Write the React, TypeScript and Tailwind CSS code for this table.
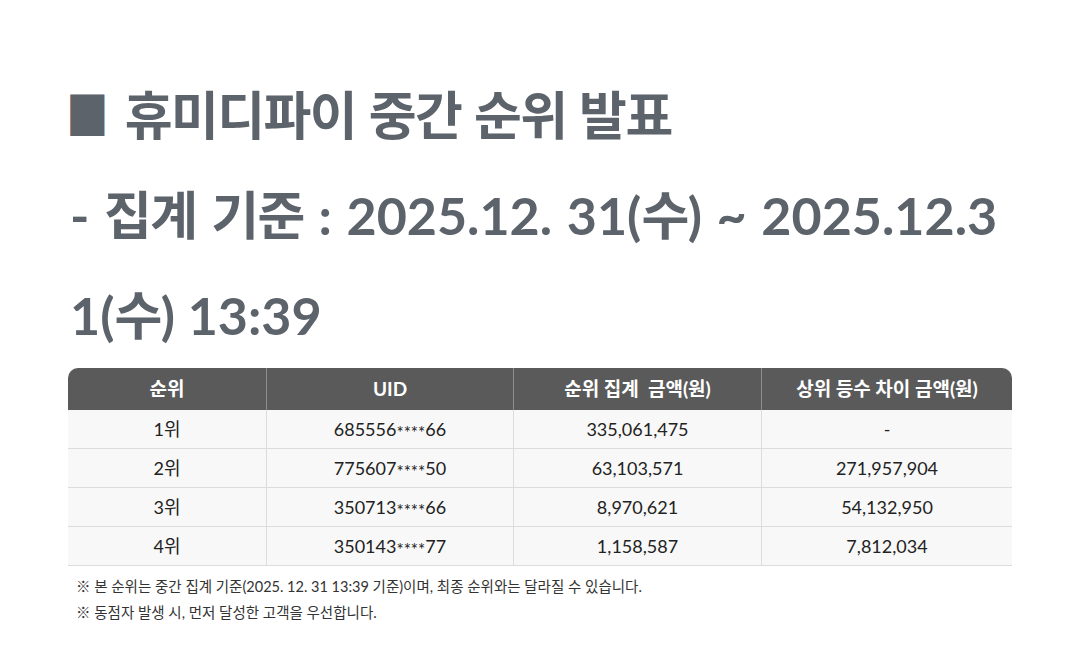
import React from "react";

const K = ({ children }: { children: React.ReactNode }) => (
  <span className="tracking-[-0.03em]">{children}</span>
);

const rows = [
  ["1위", "685556", "66", "335,061,475", "-"],
  ["2위", "775607", "50", "63,103,571", "271,957,904"],
  ["3위", "350713", "66", "8,970,621", "54,132,950"],
  ["4위", "350143", "77", "1,158,587", "7,812,034"],
];

export default function App() {
  return (
    <div className="min-h-[653px] w-[1080px] bg-white font-['Lato','Noto_Sans_CJK_KR',sans-serif] pl-[68px] pt-[65px]">
      <h1 className="text-[52px] font-bold leading-[100px] text-[#5c636b] pl-[2px]">
        <span className="inline-block origin-left scale-x-[0.82] -ml-[4px] -mr-[6px]">■</span> <K>휴미디파이</K> <K>중간</K> <K>순위</K> <K>발표</K>
        <br />
        <span className="[word-spacing:2px]">
          - <K>집계</K> <K>기준</K> : 2025.12. 31(<K>수</K>) ~ 2025.12.3
        </span>
        <br />1(<K>수</K>) 13:39
      </h1>
      <div className="mt-[3px] w-[944px]">
        <div className="grid grid-cols-[198px_247px_248px_251px] h-[42px] bg-[#5a5a5a] rounded-t-[10px] text-white text-[19px] font-bold">
          {["순위", "UID", "순위 집계  금액(원)", "상위 등수 차이 금액(원)"].map((h, i) => (
            <div
              key={i}
              className={`flex items-center justify-center whitespace-pre ${i > 0 ? "border-l border-[#8c8c8c]" : ""}`}
            >
              {h}
            </div>
          ))}
        </div>
        {rows.map((r, ri) => (
          <div
            key={ri}
            className="grid grid-cols-[198px_247px_248px_251px] h-[39px] bg-[#f8f8f8] border-b border-[#dcdcdc] text-[18px] text-[#222]"
          >
            <div className="flex items-center justify-center">{r[0]}</div>
            <div className="flex items-center justify-center border-l border-[#dcdcdc]">
              {r[1]}
              <span className="relative top-[4px] text-[17px]">****</span>
              {r[2]}
            </div>
            <div className="flex items-center justify-center border-l border-[#dcdcdc]">{r[3]}</div>
            <div className="flex items-center justify-center border-l border-[#dcdcdc]">{r[4]}</div>
          </div>
        ))}
      </div>
      <div className="pl-[8px] pt-[8px] text-[14.5px] leading-[26px] text-[#333]">
        <p>※ 본 순위는 중간 집계 기준(2025. 12. 31 13:39 기준)이며, 최종 순위와는 달라질 수 있습니다.</p>
        <p>※ 동점자 발생 시, 먼저 달성한 고객을 우선합니다.</p>
      </div>
    </div>
  );
}
